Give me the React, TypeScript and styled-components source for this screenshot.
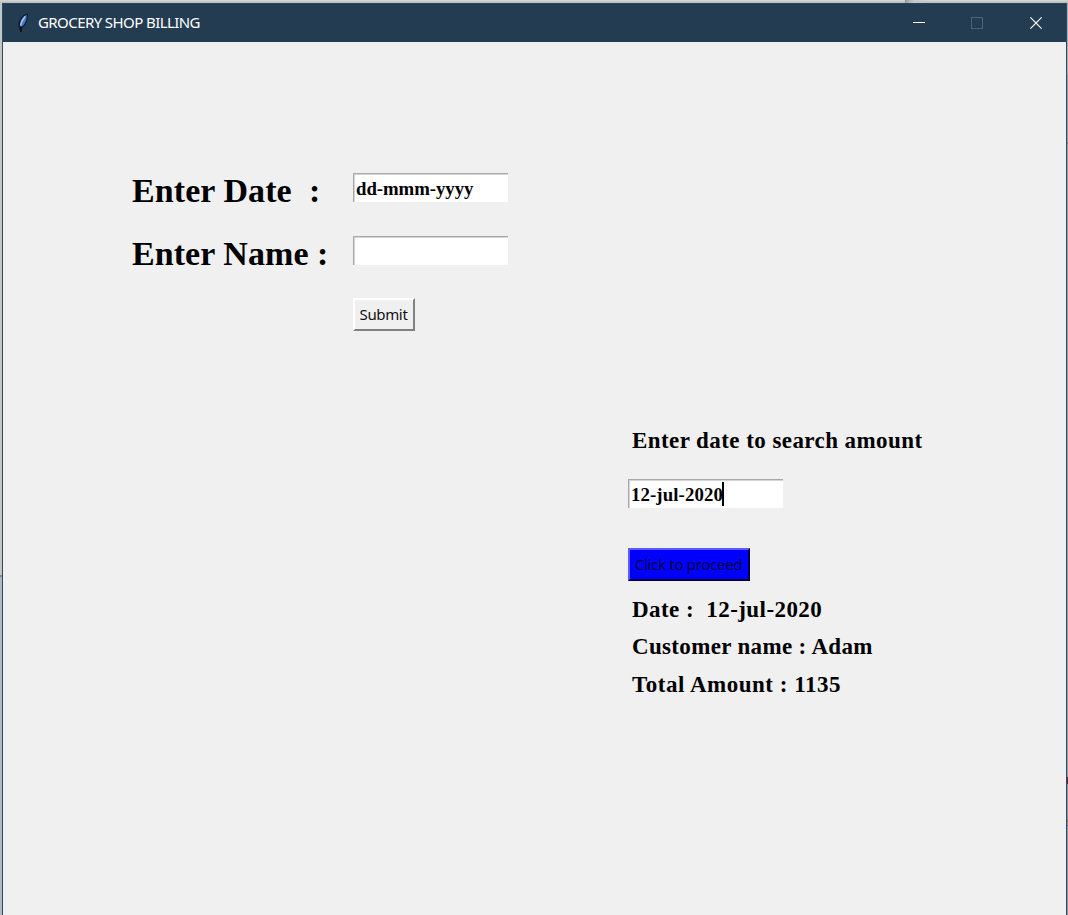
import React from "react";
import styled, { createGlobalStyle } from "styled-components";

const GlobalStyle = createGlobalStyle`
  * { box-sizing: border-box; }
  html, body { margin: 0; padding: 0; overflow: hidden; }
  body { background: #c3c9cb; }
`;

const serif = `"Liberation Serif", "Times New Roman", serif`;
const sans = `"Noto Sans", "Open Sans", sans-serif`;

const Desktop = styled.div`
  display: grid;
  grid-template-columns: 2px 1065px 1px;
  grid-template-rows: 3px 912px;
  width: 1068px;
  height: 915px;
  overflow: hidden;
`;

const TopStrip = styled.div`
  grid-column: 1 / -1;
  background: linear-gradient(90deg, transparent 905px, #8f9494 905px, #a9adad 908px, #c4c8ca 914px, transparent 930px),
    linear-gradient(#d6dbd9, #b4b9b8);
`;

const LeftStrip = styled.div`
  background: linear-gradient(#c2c6c5 0 572px, #858b8e 572px 574px, #b3b8ba 574px);
`;

const RightStrip = styled.div`
  background: linear-gradient(
    #a4adb4 0 72px, #93a0aa 72px 139px, #6d7b86 139px 141px, #93a3b1 141px 774px,
    #701c3c 774px 781px, #8198ad 781px 816px, #a07848 816px 819px, #8198ad 819px 822px,
    #77577c 822px 823px, #8198ad 823px
  );
`;

const Window = styled.main`
  display: flex;
  flex-direction: column;
  border: solid #2c4a61;
  border-width: 0 1px;
  background: #f0f0f0;
`;

const TitleBar = styled.header`
  display: flex;
  align-items: center;
  flex: 0 0 39px;
  padding: 0 1px 0 12px;
  background: #233c52;
  border-top: 1px solid #2c455a;
`;

const Title = styled.h1`
  flex: 1;
  margin: 0 0 2px 7px;
  font: 400 15px/20px ${sans};
  letter-spacing: -0.58px;
  color: #fff;
  white-space: pre;
`;

const Feather = styled.svg`
  display: block;
  width: 16px;
  height: 22px;
`;

const WindowButton = styled.button`
  display: grid;
  place-items: center;
  width: 58.5px;
  height: 38px;
  padding: 0;
  border: 0;
  background: none;
`;

const Body = styled.div`
  display: grid;
  grid-template-columns: 625px 1fr;
  flex: 1;
`;

const EntryForm = styled.section`
  display: grid;
  grid-template-columns: 221px 156px;
  grid-auto-rows: 62.5px;
  align-content: start;
  padding: 131px 0 0 129px;
`;

const SubmitCell = styled.div`
  grid-column: 2;
`;

const SearchPanel = styled.section`
  display: flex;
  flex-direction: column;
  align-items: flex-start;
  padding-top: 384px;
`;

const Text = styled.div<{ $size: number; $line: number; $spacing: number }>`
  font: 700 ${(p) => p.$size}px/${(p) => p.$line}px ${serif};
  letter-spacing: ${(p) => p.$spacing}px;
  color: #000;
  white-space: pre;
`;

const Results = styled.div`
  padding: 9.6px 0 0 4px;
`;

const Heading = styled.div`
  padding-left: 4px;
  margin-bottom: 23px;
`;

const EntryBox = styled.div`
  position: relative;
  width: 156px;
  height: 30px;
`;

const Entry = styled.input<{ $spacing?: number }>`
  display: block;
  width: 155px;
  height: 29px;
  padding: 2px 0 0 2px;
  border: solid;
  border-width: 1px 0 0 1px;
  border-color: #a8a8a8;
  border-radius: 0;
  outline: 0;
  background: #fff;
  box-shadow: inset 1px 1px #d5d5d5;
  color: #000;
  font: 700 18.8px/26px ${serif};
  letter-spacing: ${(p) => p.$spacing ?? 0}px;
`;

const Caret = styled.span`
  position: absolute;
  left: 94px;
  top: 3px;
  width: 2px;
  height: 24px;
  background: #000;
`;

const Button = styled.button<{ $primary?: boolean }>`
  display: block;
  width: ${(p) => (p.$primary ? 122 : 62)}px;
  height: 33px;
  margin-top: ${(p) => (p.$primary ? 39 : 0)}px;
  padding: 0 1px 2px 0;
  border: 2px solid;
  border-color: ${(p) => (p.$primary ? "#5a5aff #00003c #00003c #5a5aff" : "#fff #808080 #808080 #fff")};
  border-radius: 0;
  background: ${(p) => (p.$primary ? "#0000ff" : "#f0f0f0")};
  color: ${(p) => (p.$primary ? "#00003a" : "#111")};
  font: 400 15px/26px ${sans};
  letter-spacing: ${(p) => (p.$primary ? -0.3 : -0.35)}px;
  white-space: nowrap;
`;

const results = [
  { text: "Date :  12-jul-2020", spacing: 0.43 },
  { text: "Customer name : Adam", spacing: 0.34 },
  { text: "Total Amount : 1135", spacing: 0.52 },
];

export default function App() {
  return (
    <>
      <GlobalStyle />
      <Desktop>
        <TopStrip />
        <LeftStrip />
        <Window>
          <TitleBar>
            <Feather viewBox="0 0 16 22">
              <path d="M4.2 17.5 3.2 12 4.8 7 8.5 2.8 13 1.5 12.6 7 10.6 12.5 6.8 16.4Z" fill="#101a27" />
              <path d="M4.8 14.5 5.8 8.5 8.6 4.6 11.8 2.8 11.4 7.5 9.4 12 7 14.8Z" fill="#4078cc" />
              <path d="M5.6 13.5 6.9 9.3 10.2 4.4" fill="none" stroke="#a9c6e8" strokeWidth="1.5" />
              <path d="M5.8 20 6 14.5" stroke="#080c12" strokeWidth="1.6" />
            </Feather>
            <Title>GROCERY SHOP BILLING</Title>
            <WindowButton aria-label="Minimize">
              <svg width="12" height="12" shapeRendering="crispEdges">
                <path d="M0 5.5H12" stroke="#fff" />
              </svg>
            </WindowButton>
            <WindowButton aria-label="Maximize">
              <svg width="12" height="12" shapeRendering="crispEdges">
                <rect x=".5" y=".5" width="11" height="11" fill="none" stroke="#4e6375" />
              </svg>
            </WindowButton>
            <WindowButton aria-label="Close">
              <svg width="12" height="12">
                <path d="M.4 .4 11.6 11.6M11.6 .4 .4 11.6" stroke="#fff" strokeWidth="1.2" />
              </svg>
            </WindowButton>
          </TitleBar>
          <Body>
            <EntryForm>
              <Text $size={34} $line={35} $spacing={0.08}>{"Enter Date  :"}</Text>
              <Entry aria-label="Date" defaultValue="dd-mmm-yyyy" $spacing={-0.05} />
              <Text $size={34} $line={35} $spacing={0.06}>Enter Name :</Text>
              <Entry aria-label="Name" />
              <SubmitCell>
                <Button>Submit</Button>
              </SubmitCell>
            </EntryForm>
            <SearchPanel>
              <Heading>
                <Text $size={23} $line={30} $spacing={0.43}>Enter date to search amount</Text>
              </Heading>
              <EntryBox>
                <Entry aria-label="Search date" defaultValue="12-jul-2020" $spacing={0.1} />
                <Caret />
              </EntryBox>
              <Button $primary>Click to proceed</Button>
              <Results>
                {results.map((r) => (
                  <Text key={r.text} $size={23} $line={37.5} $spacing={r.spacing}>{r.text}</Text>
                ))}
              </Results>
            </SearchPanel>
          </Body>
        </Window>
        <RightStrip />
      </Desktop>
    </>
  );
}
